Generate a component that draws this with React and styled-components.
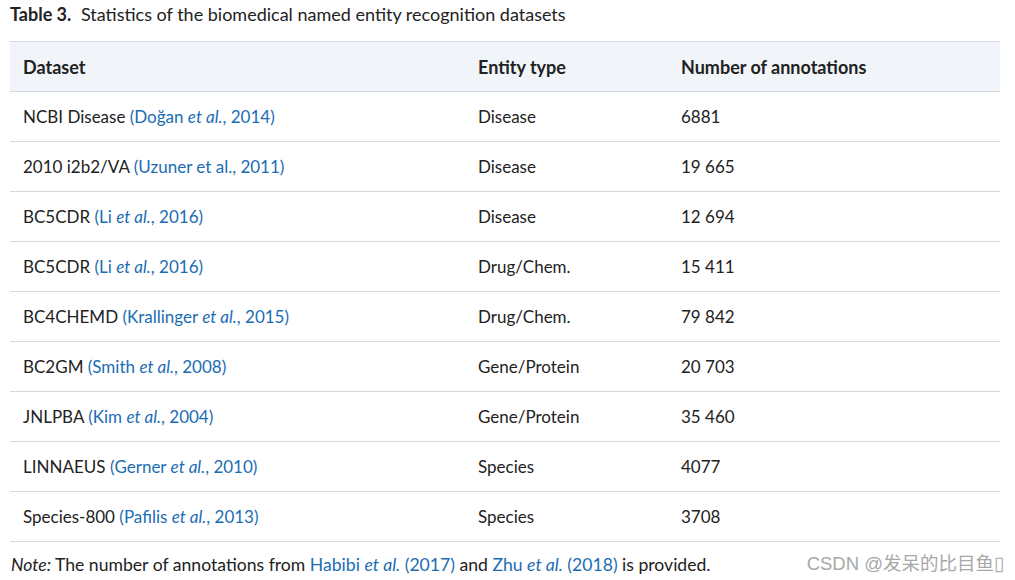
import React from "react";
import styled, { createGlobalStyle } from "styled-components";

const GlobalStyle = createGlobalStyle`
  body {
    margin: 0;
    background: #fff;
    font-family: Lato, "Noto Sans", sans-serif;
    color: #222;
  }
`;

const Page = styled.div`
  position: relative;
  width: 1015px;
  height: 580px;
  padding: 2px 15px 0 10px;
  box-sizing: border-box;
  overflow: hidden;
`;

const Caption = styled.div`
  font-size: 18px;
  line-height: 24px;
  margin-bottom: 15px;
  b {
    font-weight: 700;
    margin-right: 5px;
  }
`;

const Table = styled.div`
  display: grid;
  grid-template-columns: 455px 203px 1fr;
  border-top: 1px solid #d5d7e3;
`;

const Cell = styled.div`
  height: 49px;
  display: flex;
  align-items: center;
  padding-left: 13px;
  font-size: ${(p) => (p.head ? "18px" : "17px")};
  border-bottom: 1px solid #d5d7e3;
  background: ${(p) => (p.head ? "#f1f4f9" : "#fff")};
  font-weight: ${(p) => (p.head ? 700 : 400)};
  white-space: pre;
`;

const Ref = styled.span`
  color: #1b6cb3;
`;

const Note = styled.div`
  font-size: 17.6px;
  line-height: 24px;
  margin-top: 11px;
  padding-left: 1px;
`;

const Watermark = styled.div`
  position: absolute;
  right: 11px;
  top: 549px;
  font-size: 18.5px;
  color: #a8a8a8;
  white-space: nowrap;
  font-family: "Liberation Sans", "Noto Sans CJK SC", sans-serif;
`;

const rows = [
  ["NCBI Disease", "Doğan", true, "2014", "Disease", "6881"],
  ["2010 i2b2/VA", "Uzuner et al.", false, "2011", "Disease", "19 665"],
  ["BC5CDR", "Li", true, "2016", "Disease", "12 694"],
  ["BC5CDR", "Li", true, "2016", "Drug/Chem.", "15 411"],
  ["BC4CHEMD", "Krallinger", true, "2015", "Drug/Chem.", "79 842"],
  ["BC2GM", "Smith", true, "2008", "Gene/Protein", "20 703"],
  ["JNLPBA", "Kim", true, "2004", "Gene/Protein", "35 460"],
  ["LINNAEUS", "Gerner", true, "2010", "Species", "4077"],
  ["Species-800", "Pafilis", true, "2013", "Species", "3708"],
];

export default function App() {
  return (
    <Page>
      <GlobalStyle />
      <Caption>
        <b>Table 3.</b> Statistics of the biomedical named entity recognition datasets
      </Caption>
      <Table>
        <Cell head>Dataset</Cell>
        <Cell head>Entity type</Cell>
        <Cell head>Number of annotations</Cell>
        {rows.map(([name, author, ital, year, type, num], i) => (
          <React.Fragment key={i}>
            <Cell>
              {name} <Ref>(</Ref>
              <Ref>
                {author}
                {ital && (
                  <>
                    {" "}
                    <i>et al.</i>
                  </>
                )}
                , {year})
              </Ref>
            </Cell>
            <Cell>{type}</Cell>
            <Cell>{num}</Cell>
          </React.Fragment>
        ))}
      </Table>
      <Note>
        <i>Note:</i> The number of annotations from{" "}
        <Ref>
          Habibi <i>et al.</i> (2017)
        </Ref>{" "}
        and{" "}
        <Ref>
          Zhu <i>et al.</i> (2018)
        </Ref>{" "}
        is provided.
      </Note>
      <Watermark>CSDN @发呆的比目鱼▯</Watermark>
    </Page>
  );
}
